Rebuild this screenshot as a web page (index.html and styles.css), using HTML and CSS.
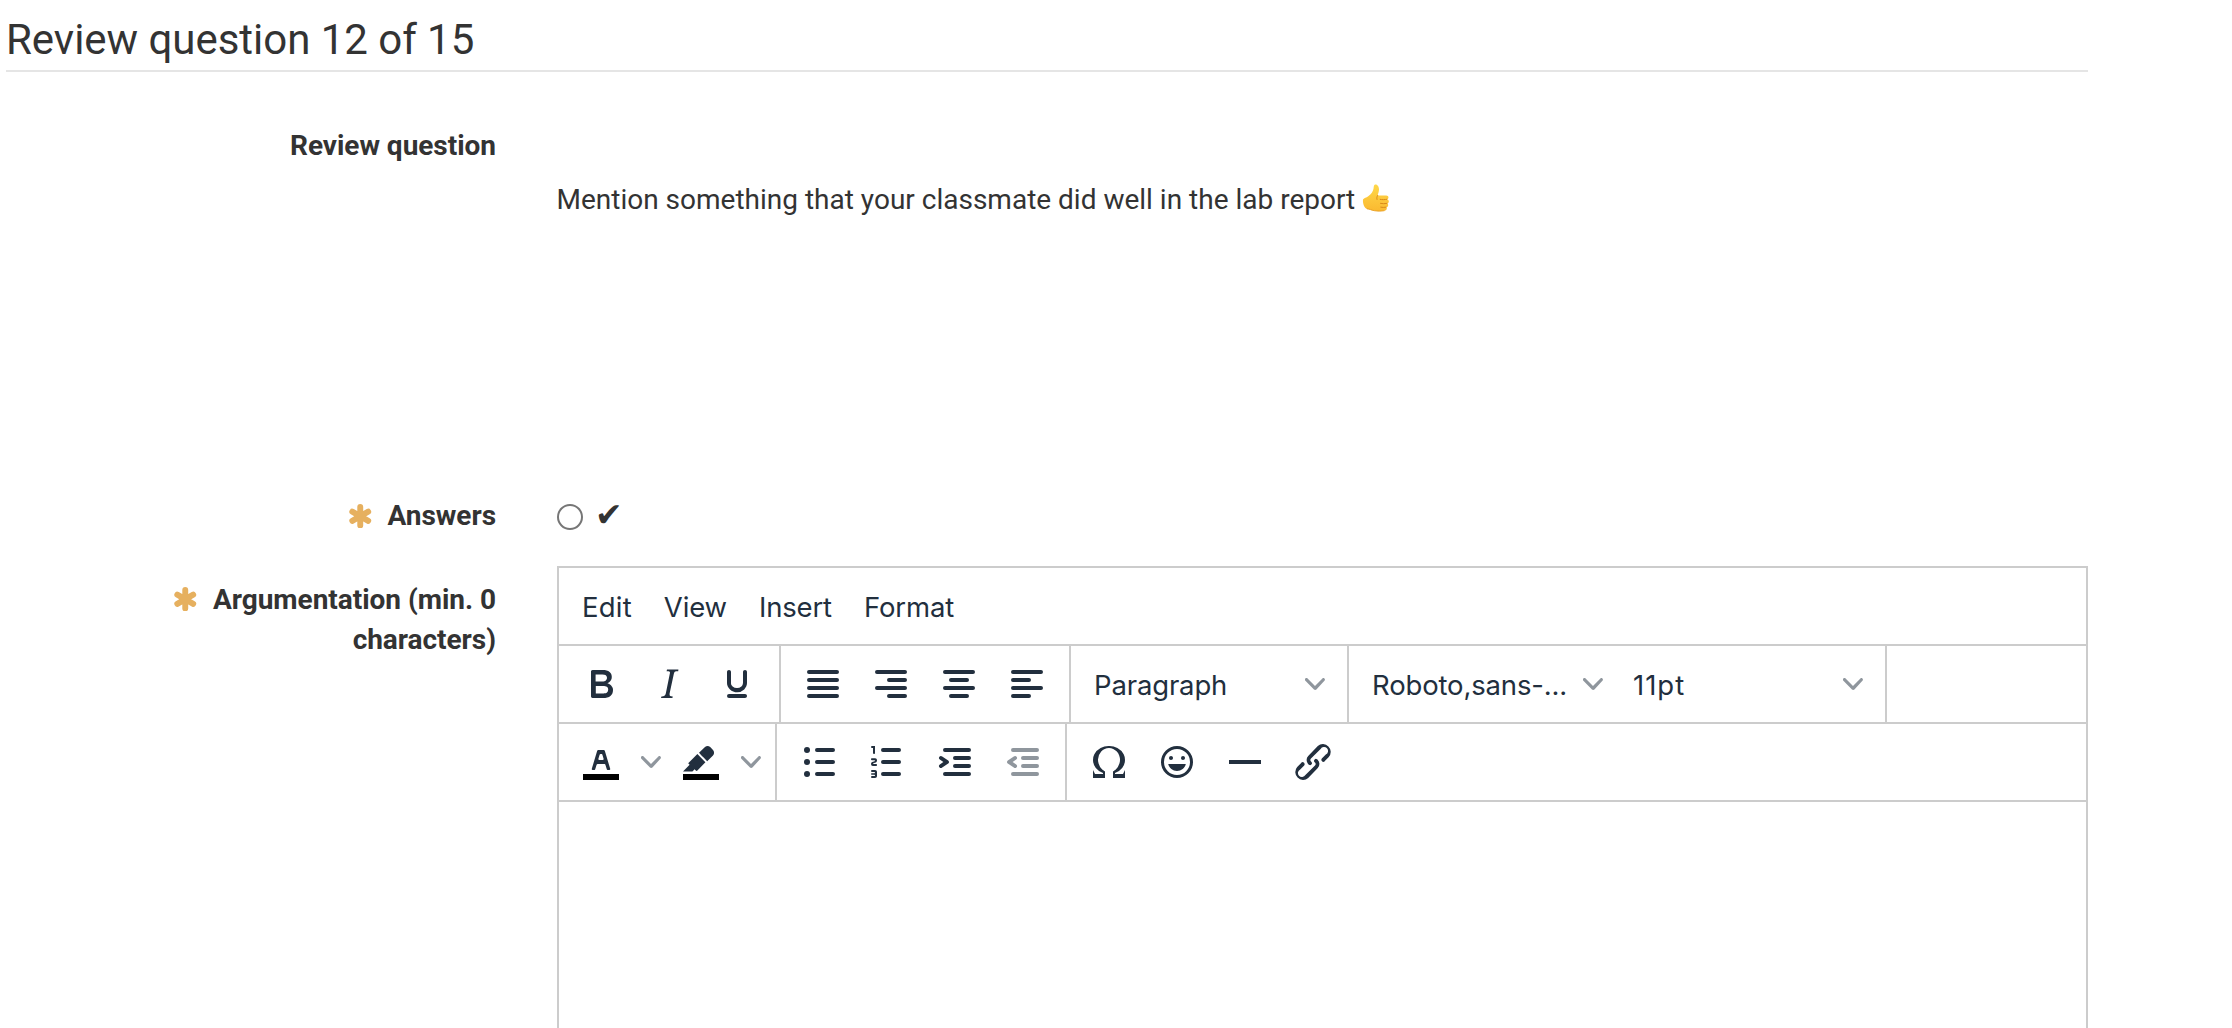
FILE: index.html
```html
<!DOCTYPE html>
<html lang="en">
<head>
<meta charset="utf-8">
<title>Review question 12 of 15</title>
<link rel="stylesheet" href="styles.css">
</head>
<body>
<svg class="defs" width="0" height="0" aria-hidden="true">
  <symbol id="chevron" viewBox="0 0 10 10"><path d="M8.7 2.2c.3-.3.8-.3 1 0 .4.4.4.9 0 1.2L5.7 7.8c-.3.3-.9.3-1.2 0L.2 3.4a.8.8 0 0 1 0-1.2c.3-.3.8-.3 1.1 0L5 6l3.7-3.8Z"/></symbol>
  <symbol id="required" viewBox="0 0 24 24"><path d="M12 3v18M4.2 7.5l15.6 9M19.8 7.5l-15.6 9" fill="none" stroke="#e6b05f" stroke-width="5.8" stroke-linecap="round"/></symbol>
</svg>
<main class="page">
  <h1 class="title">Review question 12 of 15</h1>
  <div class="row row-question">
    <div class="label">Review question</div>
    <p class="question">Mention something that your classmate did well in the lab report <svg class="thumb" viewBox="0 0 28 28" role="img" aria-label="thumbs up">
      <defs><linearGradient id="skin" x1="0" y1="0" x2="0" y2="1"><stop offset="0" stop-color="#ffd84a"/><stop offset="1" stop-color="#fab930"/></linearGradient></defs>
      <path d="M1 15.600c1.200-1.500 3.300-1.900 5.200-3.300 3.300-2.400 4.700-4.700 5.300-7.600.3-1.800.3-3.900 1.600-4.200 2.200-.5 4.100 2.200 3.900 5.300-.1 2.300-.9 3.900-1.300 5.600l8.600.2c2.600.1 2.800 3.200.9 3.800 2.300.7 2 3.600.1 4.100 1.500.8 1.200 3.400-.9 3.800 1 1 .4 3.200-1.900 3.500-3 .5-7.200.6-10.200 0-3-.6-4.800-1.700-7.300-1.900-2.500-.1-4.500-5.800-4-9.300Z" fill="url(#skin)"/>
      <path d="M24.800 15.300c-2 .4-4.800.5-6.600.1M24.900 19.400c-2 .4-4.600.4-6.400 0M24 23.200c-1.800.3-3.800.3-5.200 0M15.700 11.400c-.9 1.500-1.100 2.600-.7 4" fill="none" stroke="#d98a18" stroke-width="1" stroke-linecap="round"/>
      <path d="M5 24.800c2.500.2 4.300 1.300 7.300 1.900 3 .6 7.200.5 10.200 0" fill="none" stroke="#e69a20" stroke-width=".8"/>
    </svg></p>
  </div>
  <div class="row row-answers">
    <div class="label"><svg class="req"><use href="#required"/></svg>Answers</div>
    <label class="answer"><input class="radio" type="radio" name="answer"><span class="tick">✔</span></label>
  </div>
  <div class="row row-argument">
    <div class="label"><svg class="req"><use href="#required"/></svg>Argumentation (min. 0 characters)</div>
    <div class="editor">
      <div class="bar menubar">
        <span class="menu wide">Edit</span><span class="menu">View</span><span class="menu">Insert</span><span class="menu">Format</span>
      </div>
      <div class="bar">
        <div class="group">
          <span class="btn"><svg viewBox="0 0 24 24"><path fill-rule="evenodd" d="M7.8 19c-.3 0-.5 0-.6-.2l-.2-.5V5.700c0-.2 0-.4.2-.5l.6-.2h5c1.500 0 2.700.3 3.500 1 .7.6 1.100 1.400 1.100 2.500a3 3 0 0 1-.6 1.900c-.4.6-1 1-1.600 1.200.4.1.9.3 1.300.6s.8.7 1 1.200c.4.4.5 1 .5 1.600 0 1.300-.4 2.300-1.300 3-.8.7-2.100 1-3.800 1H7.800Zm5-8.300c.6 0 1.200-.1 1.600-.5.4-.3.6-.7.6-1.300 0-1.100-.8-1.700-2.300-1.700H9.300v3.500h3.400Zm.5 6c.7 0 1.300-.1 1.700-.4.4-.4.6-.9.6-1.500s-.2-1-.7-1.400c-.4-.3-1-.4-2-.4H9.400v3.800h4Z"/></svg></span>
          <span class="btn"><svg viewBox="0 0 24 24"><path d="m16.700 4.700-.1.900h-.3c-.6 0-1 0-1.400.3-.3.3-.4.6-.5 1.100l-2.100 9.800v.6c0 .5.4.8 1.400.8h.2l-.2.8H8l.2-.8h.2c1.100 0 1.800-.5 2-1.500l2-9.800.1-.5c0-.6-.4-.8-1.400-.8h-.3l.2-.9h5.800Z"/></svg></span>
          <span class="btn"><svg viewBox="0 0 24 24"><path d="M16 5c.6 0 1 .4 1 1v5.500a4 4 0 0 1-.4 1.800l-1 1.400a5.300 5.300 0 0 1-5.500 1 5 5 0 0 1-1.600-1c-.5-.4-.8-.9-1.100-1.400a4 4 0 0 1-.4-1.800V6c0-.6.4-1 1-1s1 .4 1 1v5.500c0 .3 0 .6.2 1l.6.7a3.300 3.300 0 0 0 2.200.8 3.400 3.400 0 0 0 2.200-.8c.3-.2.4-.5.6-.8l.2-.9V6c0-.6.4-1 1-1ZM8 17h8c.6 0 1 .4 1 1s-.4 1-1 1H8a1 1 0 0 1 0-2Z"/></svg></span>
        </div>
        <div class="group">
          <span class="btn"><svg class="lines" viewBox="0 0 24 24"><path d="M5 6h14M5 10h14M5 14h14M5 18h14"/></svg></span>
          <span class="btn"><svg class="lines" viewBox="0 0 24 24"><path d="M5 6h14M11 10h8M5 14h14M11 18h8"/></svg></span>
          <span class="btn"><svg class="lines" viewBox="0 0 24 24"><path d="M5 6h14M8 10h8M5 14h14M8 18h8"/></svg></span>
          <span class="btn"><svg class="lines" viewBox="0 0 24 24"><path d="M5 6h14M5 10h8M5 14h14M5 18h8"/></svg></span>
        </div>
        <div class="group">
          <span class="select"><span>Paragraph</span><svg class="chev"><use href="#chevron"/></svg></span>
        </div>
        <div class="group">
          <span class="select"><span>Roboto,sans-...</span><svg class="chev"><use href="#chevron"/></svg></span>
          <span class="select size"><span>11pt</span><svg class="chev"><use href="#chevron"/></svg></span>
        </div>
      </div>
      <div class="bar">
        <div class="group">
          <span class="btn"><svg viewBox="0 0 24 24"><path fill="#000" d="M3 18h18v3H3z"/><path fill-rule="evenodd" d="M8.700 16h-.8a.5.5 0 0 1-.5-.6l2.700-9c.1-.3.3-.4.5-.4h2.800c.2 0 .4.1.5.4l2.700 9a.5.5 0 0 1-.5.6h-.8a.5.5 0 0 1-.4-.4l-.7-2.200c0-.3-.3-.4-.5-.4h-3.400c-.2 0-.4.1-.5.4l-.7 2.200c0 .3-.2.4-.4.4Zm2.600-7.600-.6 2a.5.5 0 0 0 .5.6h1.600a.5.5 0 0 0 .5-.6l-.6-2c0-.3-.3-.4-.5-.4h-.4c-.2 0-.4.1-.5.4Z"/></svg></span>
          <span class="split"><svg class="chev"><use href="#chevron"/></svg></span>
          <span class="btn"><svg viewBox="0 0 24 24"><path fill="#000" d="M3 18h18v3H3z"/><path d="M7.700 16.700H3l3.300-3.300-.7-.8L10.200 8l4 4.100-4 4.200c-.2.2-.6.2-.8 0l-.6-.7-1.100 1.100Zm5-7.500L11 7.400l3-2.900a2 2 0 0 1 2.600 0L18 6c.7.7.7 2 0 2.700l-2.900 2.900-1.800-1.800-.5-.6Z"/></svg></span>
          <span class="split"><svg class="chev"><use href="#chevron"/></svg></span>
        </div>
        <div class="group">
          <span class="btn"><svg viewBox="0 0 24 24"><path class="stroke" d="M11 6h8M11 12h8M11 18h8"/><circle cx="6" cy="6" r="1.500"/><circle cx="6" cy="12" r="1.500"/><circle cx="6" cy="18" r="1.500"/></svg></span>
          <span class="btn"><svg viewBox="0 0 24 24"><path class="stroke" d="M10 6h8M10 12h8M10 18h8"/><path d="M6 4v3.500c0 .3-.2.5-.5.5a.5.5 0 0 1-.5-.5V5h-.5a.5.5 0 0 1 0-1H6Zm-1 8.800.2.2h1.300c.3 0 .5.2.5.5s-.2.5-.5.5H4.900a1 1 0 0 1-.9-1V13c0-.4.3-.8.6-1l1.200-.4.2-.3a.2.2 0 0 0-.2-.2H4.500a.5.5 0 0 1-.5-.5c0-.3.2-.5.5-.5h1.600c.5 0 .9.4.9 1v.1c0 .4-.3.8-.6 1l-1.200.4-.2.3ZM7 17v2c0 .6-.4 1-1 1H4.500a.5.5 0 0 1 0-1h1.200c.2 0 .3-.1.3-.3 0-.2-.1-.3-.3-.3H4.400a.4.4 0 1 1 0-.8h1.300c.2 0 .3-.1.3-.3 0-.2-.1-.3-.3-.3H4.500a.5.5 0 1 1 0-1H6c.6 0 1 .4 1 1Z"/></svg></span>
          <span class="btn"><svg viewBox="0 0 24 24"><path class="stroke" d="M7 6h12M12 10h7M12 14h7M7 18h12"/><path d="M4.400 13.200 6.200 12l-1.800-1.200a1 1 0 0 1 1.200-1.600l3 2a1 1 0 0 1 0 1.600l-3 2a1 1 0 1 1-1.200-1.600Z"/></svg></span>
          <span class="btn disabled"><svg viewBox="0 0 24 24"><path class="stroke" d="M7 6h12M12 10h7M12 14h7M7 18h12"/><path d="M8.600 13.200a1 1 0 0 1-1.200 1.600l-3-2a1 1 0 0 1 0-1.600l3-2a1 1 0 0 1 1.200 1.600L6.800 12l1.800 1.200Z"/></svg></span>
        </div>
        <div class="group last">
          <span class="btn"><svg viewBox="0 0 24 24"><path d="M15 18h4l1-2v4h-6v-3.300l1.400-1a6 6 0 0 0 1.800-2.900 6.300 6.300 0 0 0-.1-4.100 5.800 5.800 0 0 0-3-3.200c-.6-.3-1.300-.5-2.100-.5a5.100 5.100 0 0 0-3.900 1.800 6.300 6.300 0 0 0-1.300 6 6.200 6.200 0 0 0 1.800 3l1.400.9V20H4v-4l1 2h4v-.5l-2-1L5.400 15A6.500 6.500 0 0 1 4 11c0-1 .2-1.900.6-2.700A7 7 0 0 1 7.800 5 8.200 8.200 0 0 1 12 4a8.200 8.200 0 0 1 4.200 1 7 7 0 0 1 3.200 3.300c.4.8.6 1.700.6 2.700a6.500 6.500 0 0 1-1.400 4L17 16.500l-2 1v.5Z"/></svg></span>
          <span class="btn"><svg viewBox="0 0 24 24"><path fill-rule="evenodd" d="M9 11c.6 0 1-.4 1-1s-.4-1-1-1a1 1 0 0 0-1 1c0 .6.4 1 1 1Zm6 0c.6 0 1-.4 1-1s-.4-1-1-1a1 1 0 0 0-1 1c0 .6.4 1 1 1Zm-3 5.500c2.100 0 4-1.500 4.400-3.500H7.600c.5 2 2.300 3.500 4.400 3.500ZM12 4a8 8 0 1 0 0 16 8 8 0 0 0 0-16Zm0 14.500a6.500 6.500 0 1 1 0-13 6.500 6.500 0 0 1 0 13Z"/></svg></span>
          <span class="btn"><svg viewBox="0 0 24 24"><path d="M4 11h16v2H4z"/></svg></span>
          <span class="btn"><svg viewBox="0 0 24 24"><path d="M6.200 12.300a1 1 0 0 1 1.400 1.400l-2 2a2 2 0 1 0 2.600 2.800l4.800-4.800a1 1 0 0 0 0-1.400 1 1 0 1 1 1.400-1.300 2.900 2.900 0 0 1 0 4L9.600 20a3.900 3.900 0 0 1-5.500-5.500l2-2Zm11.600-.6a1 1 0 0 1-1.400-1.400l2-2a2 2 0 1 0-2.600-2.800L11 10.300a1 1 0 0 0 0 1.400A1 1 0 1 1 9.600 13a2.900 2.900 0 0 1 0-4L14.400 4a3.900 3.900 0 0 1 5.500 5.500l-2 2Z"/></svg></span>
        </div>
      </div>
      <div class="content"></div>
    </div>
  </div>
</main>
</body>
</html>
```
FILE: styles.css
```css
* { box-sizing: border-box; }
html, body { margin: 0; height: 100%; }
body {
  background: #fff;
  color: #333;
  font: 28px/40px Roboto, sans-serif;
  overflow: hidden;
}
.defs { display: block; height: 0; }
.page {
  display: flex;
  flex-direction: column;
  width: 2088px;
  height: 1028px;
  padding-left: 6px;
}
.title {
  margin: 0;
  height: 72px;
  padding-top: 17px;
  border-bottom: 2px solid #e5e5e5;
  font-size: 42px;
  line-height: 46px;
  font-weight: 400;
  letter-spacing: -.03px;
}
.row {
  display: grid;
  grid-template-columns: 490px 1531px;
  column-gap: 61px;
}
.row-question { height: 423px; padding-top: 54px; }
.row-answers { height: 71px; }
.row-argument { flex: 1; min-height: 0; }
.label {
  padding-left: 140px;
  font-weight: 700;
  text-align: right;
  letter-spacing: -.03px;
}
.row-answers .label { padding-top: 1px; }
.row-argument .label { padding-top: 14px; }
.req {
  width: 24.5px;
  height: 24.5px;
  margin-right: 15px;
  vertical-align: -3px;
}
.row-argument .req { vertical-align: -2px; }
.question { margin: 54px 0 0 -.5px; }
.thumb { width: 28px; height: 28px; vertical-align: -3px; }
.answer { display: flex; align-items: flex-start; }
.radio {
  appearance: none;
  width: 26px;
  height: 26px;
  margin: 9px 12px 0 0;
  border: 2px solid #767676;
  border-radius: 50%;
  background: #fff;
}
.tick { font-family: "DejaVu Sans", sans-serif; font-size: 33px; }

.editor {
  display: flex;
  flex-direction: column;
  border: 2px solid #ccc;
  border-bottom: 0;
  color: #222f3e;
  font-family: Inter, sans-serif;
  font-size: 27.5px;
  letter-spacing: -.15px;
}
.bar {
  display: flex;
  height: 78px;
  border-bottom: 2px solid #ccc;
}
.menubar {
  padding: 1px 23px 0;
  gap: 32px;
  align-items: center;
}
.menu { line-height: 68px; }
.menu.wide { letter-spacing: .2px; }
.group {
  display: flex;
  align-items: center;
  padding: 0 8px;
  border-right: 2px solid #ccc;
}
.group.last { border-right: 0; }
.btn {
  display: flex;
  align-items: center;
  justify-content: center;
  width: 68px;
  height: 68px;
}
.btn svg { width: 48px; height: 48px; fill: #222f3e; }
.btn.disabled { opacity: .5; }
.btn .lines, .stroke {
  fill: none;
  stroke: #222f3e;
  stroke-width: 2;
  stroke-linecap: round;
}
.chev { width: 20px; height: 20px; fill: #222f3e; opacity: .5; }
.split { display: flex; justify-content: center; width: 32px; }
.select {
  display: flex;
  align-items: center;
  justify-content: space-between;
  width: 260px;
  height: 68px;
  padding: 0 14px 0 15px;
}
.select span { padding-top: 1px; }
.select.size { padding-left: 16px; letter-spacing: 1px; }
.content { flex: 1; }
```
